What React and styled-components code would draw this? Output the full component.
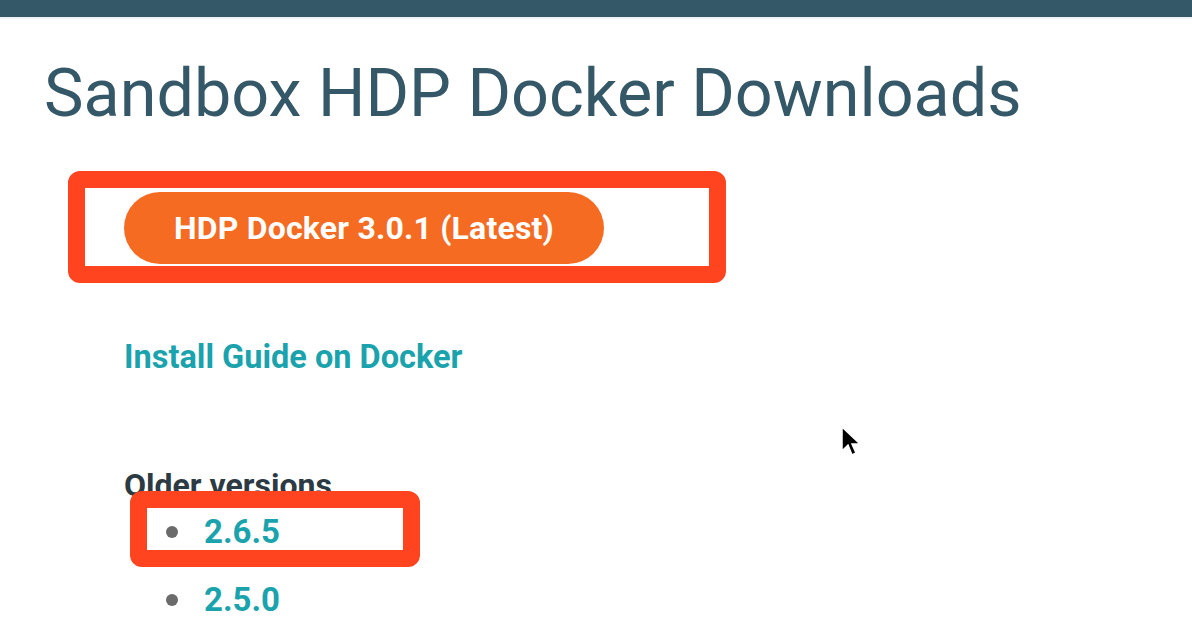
import React from 'react';
import styled, { createGlobalStyle } from 'styled-components';

const Global = createGlobalStyle`
  body {
    margin: 0;
    background: #fff;
    font-family: Roboto, "Liberation Sans", sans-serif;
  }
`;

const Page = styled.div`
  position: relative;
  width: 1192px;
  height: 640px;
  overflow: hidden;
`;

const TopBar = styled.div`
  height: 17px;
  background: #345868;
  border-bottom: 2px solid #f1f3f4;
`;

const Title = styled.h1`
  margin: 34px 0 0 44px;
  font-size: 66.5px;
  font-weight: 400;
  line-height: 80px;
  color: #345868;
`;

const Content = styled.div`
  padding-left: 124px;
`;

const Highlight = styled.div`
  position: relative;
  display: ${p => (p.$block ? 'block' : 'inline-block')};
  margin-top: ${p => p.$mt || 0}px;

  &::after {
    content: '';
    position: absolute;
    left: ${p => p.$l}px;
    top: ${p => p.$t}px;
    width: ${p => p.$w}px;
    height: ${p => p.$h}px;
    border: 17px solid #ff441f;
    border-radius: 12px;
    box-sizing: border-box;
    pointer-events: none;
  }
`;

const Button = styled.a`
  display: flex;
  align-items: center;
  justify-content: center;
  width: 480px;
  height: 72px;
  border-radius: 36px;
  background: #f56b22;
  color: #fff;
  font-size: 32px;
  font-weight: 700;
  letter-spacing: 0.2px;
  text-decoration: none;
`;

const Link = styled.a`
  display: inline-block;
  color: #1ba3ad;
  font-size: ${p => p.$size || 32.5}px;
  font-weight: 700;
  line-height: 40px;
  text-decoration: none;
`;

const GuideRow = styled.div`
  margin-top: 73px;
`;

const Heading = styled.h3`
  margin: 90px 0 0 0;
  font-size: 32px;
  font-weight: 700;
  color: #2c3a44;
  line-height: 36px;
`;

const List = styled.ul`
  margin: -5px 0 0 0;
  padding: 0;
  list-style: none;
`;

const Item = styled.li`
  display: flex;
  align-items: center;
  gap: 26px;
  height: 68px;
  padding-left: 42px;
  &::before {
    content: '';
    flex: none;
    width: 12px;
    height: 12px;
    border-radius: 50%;
    background: #6b6b6b;
  }
`;

const Cursor = styled.svg`
  position: absolute;
  left: 840px;
  top: 425px;
`;

export default function App() {
  return (
    <Page>
      <Global />
      <TopBar />
      <Title>Sandbox HDP Docker Downloads</Title>
      <Content>
        <Highlight $mt={59} $l={-56} $t={-21} $w={658} $h={112}>
          <Button href="#">HDP Docker 3.0.1 (Latest)</Button>
        </Highlight>
        <GuideRow>
          <Link href="#">Install Guide on Docker</Link>
        </GuideRow>
        <Heading>Older versions</Heading>
        <List>
          <Highlight $block $l={6} $t={-7} $w={290} $h={76}>
            <Item><Link href="#" $size={33}>2.6.5</Link></Item>
          </Highlight>
          <Item><Link href="#" $size={33}>2.5.0</Link></Item>
        </List>
      </Content>
      <Cursor width="24" height="34" viewBox="0 0 24 34">
        <path d="M2 2 L2 26 L8 20 L12 30 L16 28 L12 19 L20 19 Z" fill="#000" stroke="#fff" strokeWidth="1.5" />
      </Cursor>
    </Page>
  );
}
